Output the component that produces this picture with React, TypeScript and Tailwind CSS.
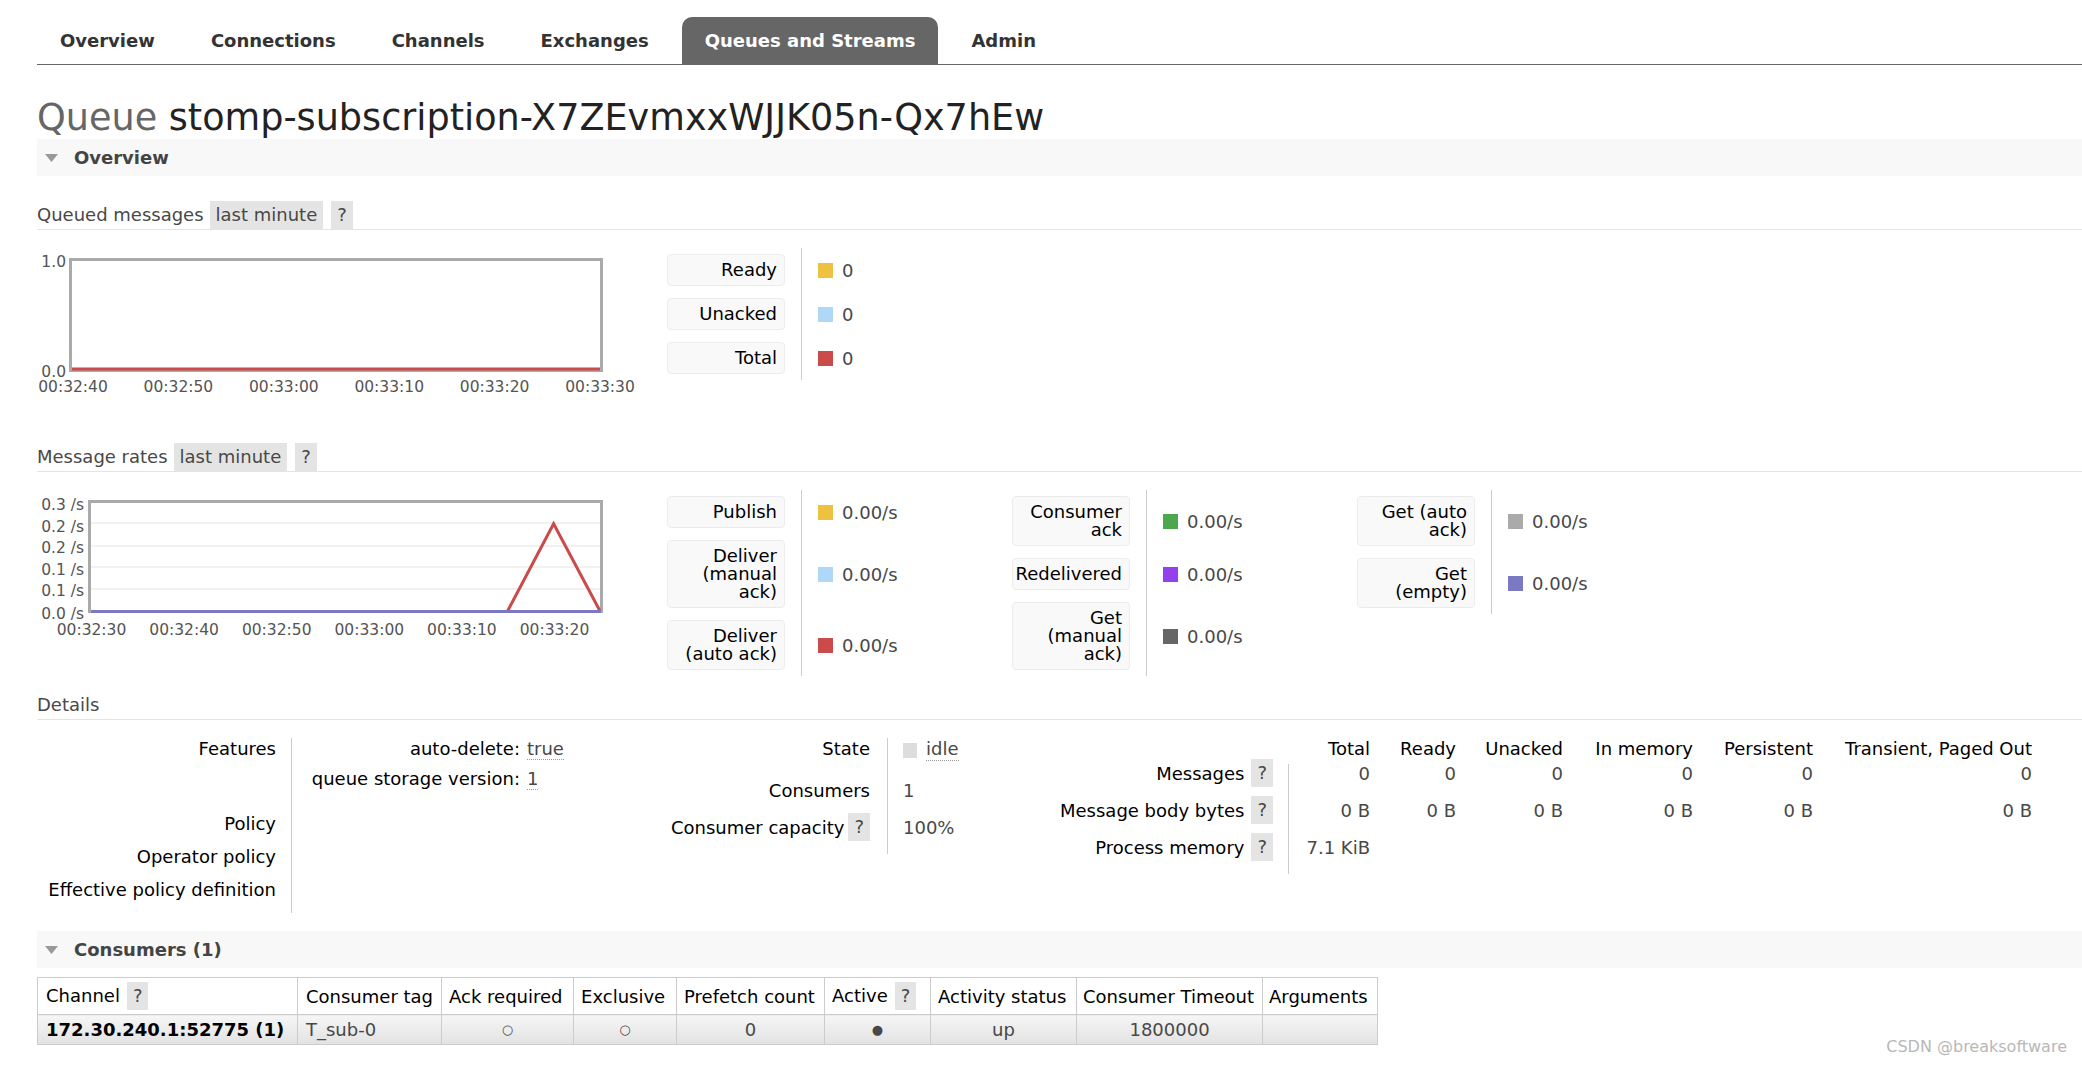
import React from "react";

type LegendRow = { lines: string[]; color: string; value: string; h: string };

const tabs = ["Overview", "Connections", "Channels", "Exchanges", "Queues and Streams", "Admin"];

const queuedRows: LegendRow[] = [
  { lines: ["Ready"], color: "bg-[#edc240]", value: "0", h: "h-[32px]" },
  { lines: ["Unacked"], color: "bg-[#afd8f8]", value: "0", h: "h-[32px]" },
  { lines: ["Total"], color: "bg-[#cb4b4b]", value: "0", h: "h-[32px]" },
];

const rateCols: LegendRow[][] = [
  [
    { lines: ["Publish"], color: "bg-[#edc240]", value: "0.00/s", h: "h-[32px]" },
    { lines: ["Deliver", "(manual", "ack)"], color: "bg-[#afd8f8]", value: "0.00/s", h: "h-[68px]" },
    { lines: ["Deliver", "(auto ack)"], color: "bg-[#cb4b4b]", value: "0.00/s", h: "h-[50px]" },
  ],
  [
    { lines: ["Consumer", "ack"], color: "bg-[#4da74d]", value: "0.00/s", h: "h-[50px]" },
    { lines: ["Redelivered"], color: "bg-[#9440ed]", value: "0.00/s", h: "h-[32px]" },
    { lines: ["Get", "(manual", "ack)"], color: "bg-[#666666]", value: "0.00/s", h: "h-[68px]" },
  ],
  [
    { lines: ["Get (auto", "ack)"], color: "bg-[#aaaaaa]", value: "0.00/s", h: "h-[50px]" },
    { lines: ["Get", "(empty)"], color: "bg-[#7c79c3]", value: "0.00/s", h: "h-[50px]" },
  ],
];

function Help({ className }: { className?: string }) {
  return <span className={["bg-[#e4e4e4] px-[6px] leading-[28px] text-[#484848]", className ?? ""].join(" ")}>?</span>;
}

function Abbr({ children }: { children: React.ReactNode }) {
  return <span className="border-b border-dotted border-[#999]">{children}</span>;
}

function SectionBar({ title, className }: { title: string; className?: string }) {
  return (
    <div className={["flex h-[37px] items-center bg-[#f8f8f8] pl-[8px] font-bold text-[#444]", className ?? ""].join(" ")}>
      <svg width="13" height="8" viewBox="0 0 13 8">
        <polygon points="0,0 13,0 6.5,8" fill="#999" />
      </svg>
      <span className="ml-[16px]">{title}</span>
    </div>
  );
}

function SubHeading({ title, className }: { title: string; className?: string }) {
  return (
    <div className={["flex items-center border-b border-[#e4e4e4] leading-[28px]", className ?? ""].join(" ")}>
      <span>{title}</span>
      <span className="ml-[6px] bg-[#e4e4e4] px-[6px]">last minute</span>
      <Help className="ml-[8px]" />
    </div>
  );
}

function LegendColumn({ rows, className }: { rows: LegendRow[]; className?: string }) {
  return (
    <div className={["flex items-start", className ?? ""].join(" ")}>
      <div className="flex flex-col gap-[12px] py-[6px] pr-[16px]">
        {rows.map((r) => (
          <div
            key={r.lines.join(" ")}
            className={[
              "flex w-[118px] flex-col items-end justify-center whitespace-nowrap rounded-[4px] border border-[#ececec] bg-[#f9f9f9] pr-[7px] leading-[18px] text-black",
              r.h,
            ].join(" ")}
          >
            {r.lines.map((l) => (
              <span key={l}>{l}</span>
            ))}
          </div>
        ))}
      </div>
      <div className="flex flex-col gap-[12px] border-l border-[#ccc] py-[6px] pl-[16px]">
        {rows.map((r) => (
          <div key={r.lines.join(" ")} className={["flex items-center", r.h].join(" ")}>
            <span className={["mr-[9px] h-[15px] w-[15px]", r.color].join(" ")} />
            {r.value}
          </div>
        ))}
      </div>
    </div>
  );
}

const axisText = { fontFamily: "DejaVu Sans, sans-serif", fontSize: 15.5, fill: "#545454" };

function QueuedChart() {
  const times = ["00:32:40", "00:32:50", "00:33:00", "00:33:10", "00:33:20", "00:33:30"];
  return (
    <svg width="603" height="150" viewBox="0 0 603 150">
      <rect x="33.5" y="11.5" width="531" height="111" fill="white" stroke="#aaa" strokeWidth="3" />
      <line x1="35" y1="121" x2="563" y2="121" stroke="#cb4b4b" strokeWidth="3" />
      <text x="29" y="19" textAnchor="end" {...axisText}>1.0</text>
      <text x="29" y="129" textAnchor="end" {...axisText}>0.0</text>
      {times.map((t, i) => (
        <text key={t} x={36 + i * 105.4} y="144" textAnchor="middle" {...axisText}>
          {t}
        </text>
      ))}
    </svg>
  );
}

function RatesChart() {
  const times = ["00:32:30", "00:32:40", "00:32:50", "00:33:00", "00:33:10", "00:33:20"];
  const ticks = [
    { y: 14, t: "0.3 /s" },
    { y: 36, t: "0.2 /s" },
    { y: 57, t: "0.2 /s" },
    { y: 79, t: "0.1 /s" },
    { y: 100, t: "0.1 /s" },
    { y: 123, t: "0.0 /s" },
  ];
  return (
    <svg width="603" height="150" viewBox="0 0 603 150">
      <rect x="52.5" y="11.5" width="512" height="110" fill="white" stroke="#aaa" strokeWidth="3" />
      {[33, 56, 77, 99].map((y) => (
        <line key={y} x1="54" y1={y} x2="563" y2={y} stroke="#ececec" strokeWidth="1.5" />
      ))}
      {ticks.map((k, i) => (
        <text key={i} x="47" y={k.y + 5.5} textAnchor="end" {...axisText}>
          {k.t}
        </text>
      ))}
      <polyline points="470.6,121 516.6,33.7 563,121" fill="none" stroke="#cb4b4b" strokeWidth="3" />
      <line x1="54" y1="121.5" x2="564" y2="121.5" stroke="#7c79c3" strokeWidth="3" />
      {times.map((t, i) => (
        <text key={t} x={54.5 + i * 92.6} y="144.5" textAnchor="middle" {...axisText}>
          {t}
        </text>
      ))}
    </svg>
  );
}

const msgHeaders = ["Total", "Ready", "Unacked", "In memory", "Persistent", "Transient, Paged Out"];
const msgRows = [
  { label: "Messages", values: ["0", "0", "0", "0", "0", "0"] },
  { label: "Message body bytes", values: ["0 B", "0 B", "0 B", "0 B", "0 B", "0 B"] },
  { label: "Process memory", values: ["7.1 KiB", "", "", "", "", ""] },
];

export default function App() {
  return (
    <div className="relative min-h-[1066px] bg-white pl-[37px] pt-[17px] font-['DejaVu_Sans',sans-serif] text-[18px] text-[#484848]">
      <nav className="flex border-b border-[#666]">
        {tabs.map((t) => (
          <div
            key={t}
            className={
              t === "Queues and Streams"
                ? "mr-[10px] rounded-t-[10px] bg-[#666] px-[23px] py-[12px] font-bold leading-[23px] text-white"
                : "mr-[10px] px-[23px] py-[12px] font-bold leading-[23px] text-[#333]"
            }
          >
            {t}
          </div>
        ))}
      </nav>

      <h1 className="mt-[32px] text-[36.6px] font-normal leading-[42px] text-[#666]">
        Queue <span className="text-[#222]">stomp-subscription-X7ZEvmxxWJJK05n-Qx7hEw</span>
      </h1>

      <SectionBar title="Overview" />

      <SubHeading title="Queued messages" className="mt-[25px]" />
      <div className="mt-[18px] flex items-start">
        <QueuedChart />
        <LegendColumn rows={queuedRows} className="ml-[27px]" />
      </div>

      <SubHeading title="Message rates" className="mt-[45px]" />
      <div className="mt-[18px] flex items-start">
        <RatesChart />
        <div className="ml-[27px] flex items-start">
          {rateCols.map((col, i) => (
            <LegendColumn key={i} rows={col} className="w-[345px]" />
          ))}
        </div>
      </div>

      <div className="mt-[15px] border-b border-[#e4e4e4] leading-[28px]">Details</div>

      <div className="mt-[18px] flex items-start">
        {/* features / policy */}
        <div className="flex w-[600px] items-start">
          <div className="flex w-[255px] flex-col border-r border-[#ccc] pb-[7px] pr-[15px] text-right text-black">
            <div className="h-[69px] leading-[22px]">Features</div>
            <div className="h-[33px] leading-[33px]">Policy</div>
            <div className="h-[33px] leading-[33px]">Operator policy</div>
            <div className="h-[33px] leading-[33px]">Effective policy definition</div>
          </div>
          <div className="grid grid-cols-[215px_auto] gap-x-[7px] gap-y-[8px] pl-[13px] leading-[22px]">
            <div className="text-right text-black">auto-delete:</div>
            <div>
              <Abbr>true</Abbr>
            </div>
            <div className="whitespace-nowrap text-right text-black">queue storage version:</div>
            <div>
              <Abbr>1</Abbr>
            </div>
          </div>
        </div>

        {/* state */}
        <div className="flex w-[403px] items-start">
          <div className="flex w-[251px] flex-col border-r border-[#ccc] pb-[13px] pr-[17px] text-right text-black">
            <div className="h-[42px] leading-[22px]">State</div>
            <div className="h-[33px] leading-[22px]">Consumers</div>
            <div className="flex h-[28px] items-center justify-end whitespace-nowrap">
              Consumer capacity
              <Help className="ml-[4px]" />
            </div>
          </div>
          <div className="flex flex-col pl-[15px]">
            <div className="flex h-[42px] items-start leading-[22px]">
              <span className="mr-[9px] mt-[5px] h-[15px] w-[14px] bg-[#ddd]" />
              <Abbr>idle</Abbr>
            </div>
            <div className="h-[33px] leading-[22px]">1</div>
            <div className="flex h-[28px] items-center">100%</div>
          </div>
        </div>

        {/* messages */}
        <div className="flex flex-col">
          <div className="flex h-[21px] leading-[22px] text-black">
            <div className="w-[249px]" />
            <div className="grid grid-cols-[81px_86px_107px_130px_120px_219px] text-right">
              {msgHeaders.map((h) => (
                <div key={h} className="whitespace-nowrap">
                  {h}
                </div>
              ))}
            </div>
          </div>
          <div className="flex items-start">
            <div className="flex w-[248px] flex-col gap-[9px] pr-[15px] text-black">
              {msgRows.map((r) => (
                <div key={r.label} className="flex h-[28px] items-center justify-end whitespace-nowrap">
                  {r.label}
                  <Help className="ml-[7px]" />
                </div>
              ))}
            </div>
            <div className="mt-[5px] border-l border-[#ccc] pb-[13px]">
              <div className="-mt-[5px] flex flex-col gap-[9px]">
                {msgRows.map((r) => (
                  <div key={r.label} className="grid h-[28px] grid-cols-[81px_86px_107px_130px_120px_219px] items-center text-right">
                    {r.values.map((v, i) => (
                      <div key={i} className="whitespace-nowrap">
                        {v}
                      </div>
                    ))}
                  </div>
                ))}
              </div>
            </div>
          </div>
        </div>
      </div>

      <SectionBar title="Consumers (1)" className="mt-[18px]" />

      <table className="mt-[9px] table-fixed border-collapse border border-[#ccc]">
        <thead>
          <tr className="text-left text-black">
            <th className="h-[37px] w-[260px] whitespace-nowrap border border-[#ccc] px-[8px] font-normal">
              Channel
              <Help className="ml-[7px] inline-block" />
            </th>
            <th className="w-[144px] whitespace-nowrap border border-[#ccc] px-[8px] font-normal">Consumer tag</th>
            <th className="w-[132px] whitespace-nowrap border border-[#ccc] px-[7px] font-normal">Ack required</th>
            <th className="w-[103px] whitespace-nowrap border border-[#ccc] px-[7px] font-normal">Exclusive</th>
            <th className="w-[148px] whitespace-nowrap border border-[#ccc] px-[7px] font-normal">Prefetch count</th>
            <th className="w-[106px] whitespace-nowrap border border-[#ccc] px-[7px] font-normal">
              Active
              <Help className="ml-[7px] inline-block" />
            </th>
            <th className="w-[146px] whitespace-nowrap border border-[#ccc] px-[7px] font-normal">Activity status</th>
            <th className="w-[186px] whitespace-nowrap border border-[#ccc] px-[6px] font-normal">Consumer Timeout</th>
            <th className="w-[115px] whitespace-nowrap border border-[#ccc] px-[6px] font-normal">Arguments</th>
          </tr>
        </thead>
        <tbody>
          <tr>
            <td className="h-[30px] whitespace-nowrap border border-[#ccc] bg-linear-to-b from-[#f6f6f6] to-[#e2e2e2] px-[8px] font-bold text-black">
              172.30.240.1:52775 (1)
            </td>
            <td className="border border-[#ccc] bg-linear-to-b from-[#f6f6f6] to-[#e2e2e2] px-[8px]">T_sub-0</td>
            <td className="border border-[#ccc] bg-linear-to-b from-[#f6f6f6] to-[#e2e2e2] text-center text-[13px]">○</td>
            <td className="border border-[#ccc] bg-linear-to-b from-[#f6f6f6] to-[#e2e2e2] text-center text-[13px]">○</td>
            <td className="border border-[#ccc] bg-linear-to-b from-[#f6f6f6] to-[#e2e2e2] text-center">0</td>
            <td className="border border-[#ccc] bg-linear-to-b from-[#f6f6f6] to-[#e2e2e2] text-center text-[13px]">●</td>
            <td className="border border-[#ccc] bg-linear-to-b from-[#f6f6f6] to-[#e2e2e2] text-center">up</td>
            <td className="border border-[#ccc] bg-linear-to-b from-[#f6f6f6] to-[#e2e2e2] text-center">1800000</td>
            <td className="border border-[#ccc] bg-linear-to-b from-[#f6f6f6] to-[#e2e2e2]" />
          </tr>
        </tbody>
      </table>

      <div className="absolute bottom-[7px] right-[15px] text-[16px] text-[#b8b8b8]">CSDN @breaksoftware</div>
    </div>
  );
}
